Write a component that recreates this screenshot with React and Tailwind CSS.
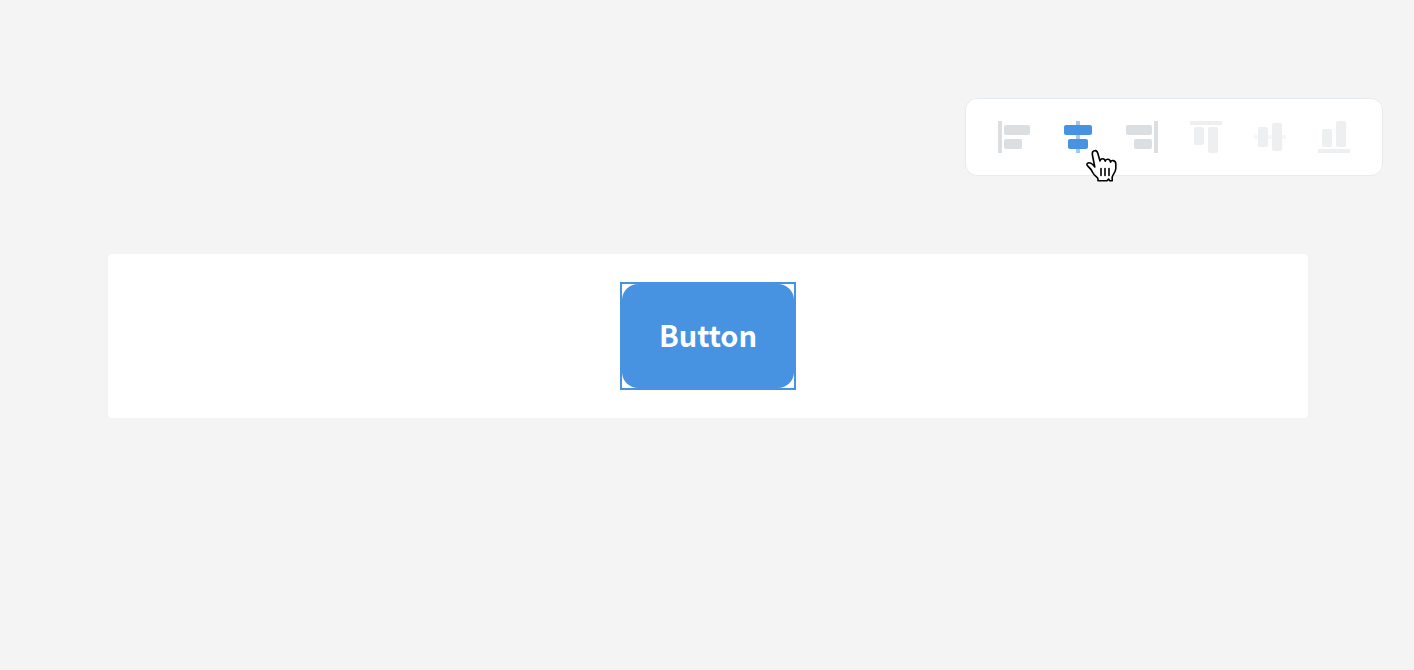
import React from "react";

const tools = [
  {
    label: "Align left",
    line: [0, 0, 4, 32],
    bars: [[6, 4, 26, 10], [6, 18, 18, 10]],
  },
  {
    label: "Align horizontal centers",
    line: [14, 0, 4, 32],
    bars: [[2, 4, 28, 10], [6, 18, 20, 10]],
    active: true,
  },
  {
    label: "Align right",
    line: [28, 0, 4, 32],
    bars: [[0, 4, 26, 10], [8, 18, 18, 10]],
  },
  {
    label: "Align top",
    line: [0, 0, 32, 4],
    bars: [[4, 6, 10, 18], [18, 6, 10, 26]],
    disabled: true,
  },
  {
    label: "Align vertical centers",
    line: [0, 14, 32, 4],
    bars: [[4, 6, 10, 20], [18, 2, 10, 28]],
    disabled: true,
    fadedLine: true,
  },
  {
    label: "Align bottom",
    line: [0, 28, 32, 4],
    bars: [[4, 8, 10, 18], [18, 0, 10, 26]],
    disabled: true,
  },
];

function Bar({ box, rx, opacity }) {
  const [x, y, width, height] = box;
  return <rect x={x} y={y} width={width} height={height} rx={rx} opacity={opacity} />;
}

function HandCursor() {
  return (
    <svg
      className="pointer-events-none absolute top-[27px] left-[22px] h-9 w-9"
      viewBox="0 0 36 36"
      strokeLinecap="round"
      strokeLinejoin="round"
      aria-hidden="true"
    >
      <path
        d="M10.8 19 L8.4 7 C7.9 4.4 8.9 3 10.6 2.7 C12.2 2.4 13.2 3.5 13.8 5.3 L16 13 C16.2 11.4 17.2 10.7 18.6 10.7 C20.1 10.7 21 11.7 21.2 13.2 C21.6 11.8 22.5 11.1 23.8 11.2 C25.3 11.3 26.3 12.3 26.5 14.1 C27 12.9 27.9 12.4 29.1 12.6 C30.8 12.9 31.8 14 31.8 16 V20.5 C31.8 24.2 28.8 26.4 28.2 29 V32.8 H25.8 L24.6 31 L23 32.8 H14 V31 C14 29.2 10.4 27.9 9 25 C7.7 22.3 6.6 20.4 4.2 18.5 C2.8 17.4 2.6 16.3 3.3 15.5 C4.2 14.5 5.8 14.5 7.6 15.6 C9 16.4 9.8 17.5 10.8 19 Z"
        fill="white"
        stroke="black"
        strokeWidth="1.6"
      />
      <path d="M17 20.5 V27.5 M21 20.5 V27.5 M25 20.5 V27.5" fill="none" stroke="black" strokeWidth="1.6" />
    </svg>
  );
}

function Tool({ tool }) {
  const color = tool.active ? "text-[#4793e1]" : tool.disabled ? "text-[#eeeff1]" : "text-[#dbdfe2]";
  return (
    <button
      type="button"
      aria-label={tool.label}
      aria-pressed={Boolean(tool.active)}
      disabled={tool.disabled}
      className={`relative size-8 ${color}`}
    >
      <svg className="size-8" viewBox="0 0 32 32" fill="currentColor" aria-hidden="true">
        <Bar box={tool.line} opacity={tool.active || tool.fadedLine ? 0.5 : 1} />
        {tool.bars.map((box, i) => (
          <Bar key={i} box={box} rx={2} />
        ))}
      </svg>
      {tool.active && <HandCursor />}
    </button>
  );
}

export default function App() {
  return (
    <div className="min-h-screen bg-[#f4f4f4] pt-[98px]">
      <div className="flex justify-end pr-[31px]">
        <div
          role="toolbar"
          aria-label="Alignment"
          className="flex gap-8 rounded-xl border border-[#e8ebee] bg-white px-8 py-[22px]"
        >
          {tools.map((tool) => (
            <Tool key={tool.label} tool={tool} />
          ))}
        </div>
      </div>

      <main className="mt-[78px] pr-[106px] pl-[108px]">
        <div className="flex justify-center rounded-sm bg-white py-7">
          <div className="border-2 border-[#4793e1]">
            <button
              type="button"
              className="rounded-2xl bg-[#4793e1] px-[37px] pt-[26px] pb-[30px] font-['Noto_Sans_CJK_SC',sans-serif] text-[29px] leading-[48px] font-bold text-white"
            >
              Button
            </button>
          </div>
        </div>
      </main>
    </div>
  );
}
